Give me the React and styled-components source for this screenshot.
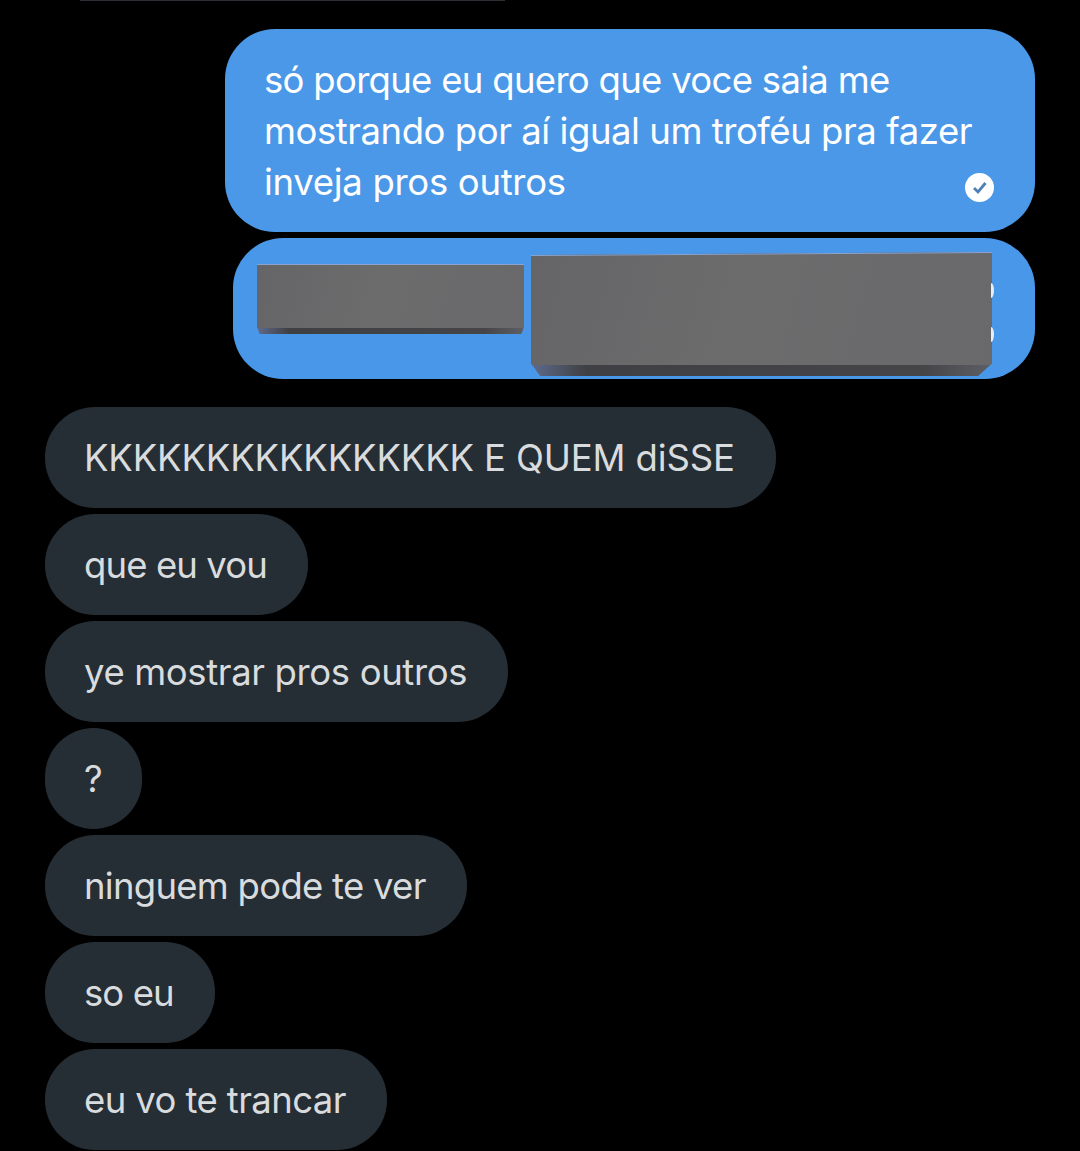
import React from "react";
import styled, { createGlobalStyle } from "styled-components";

const Global = createGlobalStyle`
  html, body { margin: 0; padding: 0; background: #000; }
  body { font-family: Inter, "Liberation Sans", Arial, sans-serif; }
`;

const Page = styled.div`
  width: 1080px;
  height: 1151px;
  overflow: hidden;
  background: #000;
  display: flex;
  flex-direction: column;
`;

const TopEdge = styled.div`
  width: 425px;
  height: 1px;
  margin-left: 80px;
  background: #2c2f33;
`;

const Sent = styled.div`
  display: flex;
  flex-direction: column;
  align-items: flex-end;
  gap: 6px;
  margin-top: 28px;
  padding-right: 45px;
`;

const SentBubble = styled.div`
  position: relative;
  box-sizing: border-box;
  width: 810px;
  height: 203px;
  padding: 26px 40px 0 39px;
  border-radius: 50px;
  background: #4b98e8;
  color: #fff;
  font-size: 36.5px;
  line-height: 51px;
`;

const SentLine = styled.div`
  letter-spacing: ${p => p.$track}px;
  white-space: nowrap;
`;

const ReadMark = styled.svg`
  position: absolute;
  right: 41px;
  bottom: 30px;
  width: 29px;
  height: 29px;
`;

const RedactedBubble = styled.div`
  position: relative;
  box-sizing: border-box;
  width: 802px;
  height: 141px;
  border-radius: 50px;
  background: #4997e9;
  display: flex;
  align-items: flex-start;
  gap: 7px;
  padding: 14px 0 0 24px;
`;

const Block = styled.div`
  position: relative;
  flex: none;
  width: ${p => p.$w}px;
  height: ${p => p.$h}px;
  margin-top: ${p => p.$top}px;
  clip-path: polygon(${p => p.$outline});
  background:
    linear-gradient(#8aa4cf, #8aa4cf) top / 100% 10px no-repeat,
    linear-gradient(90deg, #5f6b8c, #3f4044 12%, #454548 85%, #5e5f66);

  &::before {
    content: "";
    position: absolute;
    inset: 0;
    bottom: ${p => p.$drop}px;
    clip-path: polygon(${p => p.$face});
    background: linear-gradient(105deg, #656567, #6c6c6d 45%, #69696b);
  }
`;

const Sliver = styled.span`
  position: absolute;
  left: 758px;
  top: ${p => p.$top}px;
  width: 3px;
  height: 15px;
  border-radius: 0 100% 100% 0 / 0 50% 50% 0;
  background: #e6eef8;
`;

const Received = styled.div`
  display: flex;
  flex-direction: column;
  align-items: flex-start;
  gap: 6px;
  margin-top: 28px;
  padding-left: 45px;
`;

const ReceivedBubble = styled.div`
  box-sizing: border-box;
  height: 101px;
  padding: 0 41px 0 39px;
  border-radius: 50px;
  background: #262e35;
  color: #d9dcde;
  font-size: 36.5px;
  line-height: 102px;
  letter-spacing: ${p => p.$track}px;
  white-space: nowrap;
`;

const sentLines = [
  ["só porque eu quero que voce saia me", -0.7],
  ["mostrando por aí igual um troféu pra fazer", -0.45],
  ["inveja pros outros", -0.3],
];

const messages = [
  ["KKKKKKKKKKKKKKKK E QUEM diSSE", -0.15],
  ["que eu vou", -0.9],
  ["ye mostrar pros outros", -0.37],
  ["?", -1.6],
  ["ninguem pode te ver", -0.73],
  ["so eu", -0.9],
  ["eu vo te trancar", -0.6],
];

export default function App() {
  return (
    <Page>
      <Global />
      <TopEdge />
      <Sent>
        <SentBubble>
          {sentLines.map(([text, track]) => (
            <SentLine key={text} $track={track}>{text}</SentLine>
          ))}
          <ReadMark viewBox="0 0 29 29">
            <circle cx="14.5" cy="14.5" r="14.5" fill="#fff" />
            <path d="M9 15l4 4 7.5-9" fill="none" stroke="#4f7fb5" strokeWidth="2.8" />
          </ReadMark>
        </SentBubble>
        <RedactedBubble>
          <Block
            $w={267}
            $h={70}
            $top={12}
            $drop={6}
            $outline="0 0, 100% 0, 100% 90%, 99% 100%, 1% 100%, 0 90%"
            $face="0 1px, 100% 1px, 100% 100%, 0 100%"
          />
          <Block
            $w={461}
            $h={124}
            $top={0}
            $drop={11}
            $outline="0 3px, 100% 0, 100% 90%, 97% 100%, 2% 100%, 0 90%"
            $face="0 4px, 100% 1px, 100% 100%, 0 100%"
          />
          <Sliver $top={45} />
          <Sliver $top={89} />
        </RedactedBubble>
      </Sent>
      <Received>
        {messages.map(([text, track]) => (
          <ReceivedBubble key={text} $track={track}>{text}</ReceivedBubble>
        ))}
      </Received>
    </Page>
  );
}
